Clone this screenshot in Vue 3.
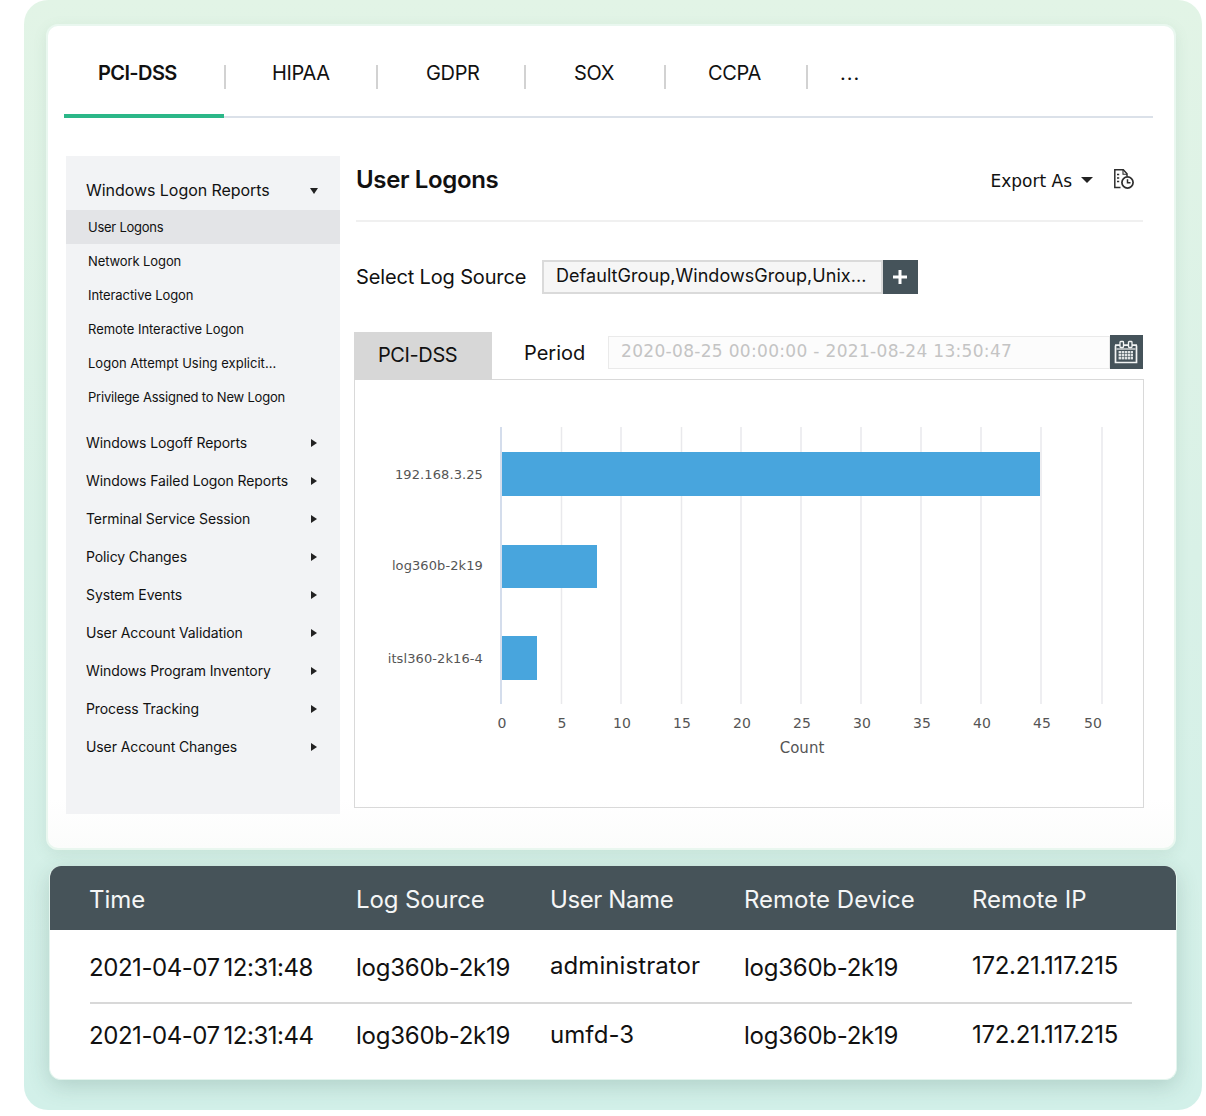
<script setup>
const tabs = [
  { name: 'PCI-DSS', w: 160, pad: 34, active: true },
  { name: 'HIPAA', w: 152, pad: 48 },
  { name: 'GDPR', w: 148, pad: 50 },
  { name: 'SOX', w: 140, pad: 50 },
  { name: 'CCPA', w: 142, pad: 44 }
]
const subs = [
  { t: 'User Logons', ls: -0.25 },
  { t: 'Network Logon', ls: -0.1 },
  { t: 'Interactive Logon', ls: -0.08 },
  { t: 'Remote Interactive Logon', ls: -0.05 },
  { t: 'Logon Attempt Using explicit...', ls: 0.02 },
  { t: 'Privilege Assigned to New Logon', ls: -0.2 }
]
const groups = ['Windows Logoff Reports', 'Windows Failed Logon Reports', 'Terminal Service Session', 'Policy Changes', 'System Events', 'User Account Validation', 'Windows Program Inventory', 'Process Tracking', 'User Account Changes']
const grid = [561.5, 621, 681.5, 741, 801, 861, 921, 981, 1041, 1102]
const ticks = [[502, 0], [562, 5], [622, 10], [682, 15], [742, 20], [802, 25], [862, 30], [922, 35], [982, 40], [1042, 45], [1093, 50]]
const bars = [
  { label: '192.168.3.25', y: 452, h: 44, w: 538, ty: 479 },
  { label: 'log360b-2k19', y: 545, h: 43, w: 95, ty: 570 },
  { label: 'itsl360-2k16-4', y: 636, h: 44, w: 35, ty: 663 }
]
const calCells = []
for (let r = 0; r < 3; r++) {
  for (let c = 0; c < 5; c++) {
    calCells.push({ x: 4.600 + c * 3, y: 11 + r * 3 })
  }
}
const cols = ['Time', 'Log Source', 'User Name', 'Remote Device', 'Remote IP']
const rows = [
  ['2021-04-07 12:31:48', 'log360b-2k19', 'administrator', 'log360b-2k19', '172.21.117.215'],
  ['2021-04-07 12:31:44', 'log360b-2k19', 'umfd-3', 'log360b-2k19', '172.21.117.215']
]
</script>

<template>
  <div class="page">
    <div class="panel">
      <section class="card">
        <nav class="tabs">
          <div v-for="t in tabs" :key="t.name" class="tab" :class="{ active: t.active }" :style="{ width: t.w + 'px', paddingLeft: t.pad + 'px' }">
            <span>{{ t.name }}</span>
            <i class="sep"></i>
          </div>
          <div class="tab more">...</div>
        </nav>

        <div class="body">
          <aside class="side">
            <div class="side-head"><span>Windows Logon Reports</span><i class="caret-down"></i></div>
            <div v-for="(s, i) in subs" :key="s.t" class="sub" :class="{ current: i === 0 }" :style="{ letterSpacing: s.ls + 'px' }">{{ s.t }}</div>
            <div class="groups">
              <div v-for="g in groups" :key="g" class="group"><span>{{ g }}</span><i class="caret-right"></i></div>
            </div>
          </aside>

          <main class="main">
            <header class="title-row">
              <h1>User Logons</h1>
              <div class="export">
                <span class="export-label">Export As</span>
                <i class="caret-export"></i>
                <svg class="doc" width="22" height="22" viewBox="0 0 22 22" fill="none" stroke="#2e2e2e" stroke-width="1.5">
                  <path d="M7.500 19.500H1.800V1.800h8.500l3.700 3.900v2.800" />
                  <path d="M10 2v4.200h4" stroke-width="1.100" />
                  <path d="M4 6.500h2.200M4 10h2.200M4 13.500h2.200" stroke-width="1.700" />
                  <circle cx="14.500" cy="14.500" r="5.600" stroke-width="1.700" />
                  <path d="M14.500 11.200v3.500h3" stroke-width="1.500" />
                </svg>
              </div>
            </header>

            <div class="source-row">
              <span class="source-label">Select Log Source</span>
              <div class="source-value">DefaultGroup,WindowsGroup,Unix...</div>
              <button class="plus" aria-label="Add">
                <svg width="16" height="16" viewBox="0 0 16 16"><path d="M8 1v14M1 8h14" stroke="#fff" stroke-width="3" /></svg>
              </button>
            </div>

            <div class="filter-row">
              <div class="pill">PCI-DSS</div>
              <span class="period">Period</span>
              <div class="date">2020-08-25 00:00:00 - 2021-08-24 13:50:47</div>
              <div class="cal">
                <svg width="24" height="24" viewBox="0 0 24 24">
                  <path d="M1.500 5.500v17h21v-17" fill="none" stroke="#f2f4f4" stroke-width="1.700" />
                  <path d="M1 5.200h5M10 5.200h4M18 5.200h5" stroke="#f2f4f4" stroke-width="1.700" />
                  <rect x="6" y="1.500" width="3.500" height="6" rx=".8" fill="#45535a" stroke="#f2f4f4" stroke-width="1.300" />
                  <rect x="14.500" y="1.500" width="3.500" height="6" rx=".8" fill="#45535a" stroke="#f2f4f4" stroke-width="1.300" />
                  <path d="M2.500 9h19" stroke="#f2f4f4" stroke-width="1.200" />
                  <rect v-for="(c, i) in calCells" :key="i" :x="c.x" :y="c.y" width="2.400" height="2.400" fill="#dfe3e4" />
                </svg>
              </div>
            </div>

            <div class="chart">
              <svg width="790" height="429" viewBox="354 379 790 429">
                <line v-for="x in grid" :key="x" :x1="x" :x2="x" y1="427" y2="704" stroke="#e9e9ec" stroke-width="1.500" />
                <line x1="501" x2="501" y1="427" y2="704" stroke="#c6d2e6" stroke-width="1.500" />
                <g v-for="b in bars" :key="b.label">
                  <rect x="502" :y="b.y" :width="b.w" :height="b.h" fill="#48a5dd" />
                  <text x="483" :y="b.ty" text-anchor="end" class="cat">{{ b.label }}</text>
                </g>
                <text v-for="t in ticks" :key="t[1]" :x="t[0]" y="728" text-anchor="middle" class="tick">{{ t[1] }}</text>
                <text x="802" y="753" text-anchor="middle" class="axis">Count</text>
              </svg>
            </div>
          </main>
        </div>
      </section>

      <section class="table">
        <div class="thead">
          <div v-for="(c, j) in cols" :key="c" :class="'h' + j">{{ c }}</div>
        </div>
        <div v-for="(r, i) in rows" :key="i" class="trow" :class="{ first: i === 0 }">
          <div v-for="(v, j) in r" :key="j" :class="['c' + j, { raised: j === 2 || j === 4 }]">{{ v }}</div>
        </div>
      </section>
    </div>
  </div>
</template>

<style>
html, body { margin: 0; background: #fff; }
</style>

<style scoped>
* { box-sizing: border-box; }
.page {
  width: 1206px;
  height: 1116px;
  padding-left: 24px;
  background: #fff;
  font-family: Inter, "Liberation Sans", sans-serif;
  color: #111;
  overflow: hidden;
}
.panel {
  width: 1178px;
  height: 1110px;
  padding: 24px 0 0 22px;
  border-radius: 24px;
  background: linear-gradient(180deg, #e2f4e6 0%, #d9f1e7 50%, #d2f0e9 100%);
}
.card {
  width: 1130px;
  height: 826px;
  padding: 0 21px 0 16px;
  background: linear-gradient(180deg, #fff 94%, #fbfcfb 100%);
  border: 2px solid #e9f7ef;
  border-radius: 12px;
  box-shadow: 0 4px 14px rgba(90, 130, 110, 0.12);
}
.tabs {
  display: flex;
  height: 92px;
  border-bottom: 2px solid #dbe1e9;
}
.tab {
  position: relative;
  display: flex;
  align-items: center;
  height: 92px;
  padding-top: 2px;
  font-size: 20px;
  letter-spacing: -0.35px;
}
.tab.active { font-weight: 600; letter-spacing: -0.6px; }
.tab.active::after {
  content: '';
  position: absolute;
  left: 0;
  right: 0;
  bottom: 0;
  height: 4px;
  background: #2bb788;
}
.sep {
  position: absolute;
  right: -2px;
  top: 39px;
  width: 2px;
  height: 24px;
  background: #d2d2d2;
}
.more { padding-left: 34px; letter-spacing: 1px; }
.body {
  display: flex;
  padding: 38px 0 0 2px;
}
.side {
  flex: none;
  width: 274px;
  height: 658px;
  background: #f2f3f5;
}
.side-head {
  display: flex;
  align-items: center;
  justify-content: space-between;
  height: 54px;
  padding: 13px 22px 0 20px;
  font-size: 16px;
  letter-spacing: -0.05px;
}
.caret-down {
  width: 0;
  height: 0;
  margin-top: 2px;
  border: 4.500px solid transparent;
  border-top: 6px solid #222;
  border-bottom: 0;
}
.sub {
  height: 34px;
  padding-left: 22px;
  font-size: 13px;
  line-height: 34px;
}
.sub.current { background: #e3e4e7; }
.groups { padding-top: 9px; }
.group {
  display: flex;
  align-items: center;
  justify-content: space-between;
  height: 38px;
  padding: 0 23px 0 20px;
  font-size: 14px;
  letter-spacing: -0.1px;
}
.caret-right {
  width: 0;
  height: 0;
  margin-top: 1px;
  border: 4.500px solid transparent;
  border-left: 6px solid #222;
  border-right: 0;
}
.main {
  flex: none;
  width: 790px;
  margin-left: 14px;
}
.title-row {
  display: flex;
  align-items: center;
  justify-content: space-between;
  height: 66px;
  margin: 0 1px 0 2px;
  padding-bottom: 18px;
  border-bottom: 2px solid #f0f0f0;
}
h1 {
  margin: 0;
  font-size: 24px;
  font-weight: 600;
  letter-spacing: -0.35px;
}
.export {
  display: flex;
  align-items: center;
  padding-right: 8px;
  font-family: "DejaVu Sans", sans-serif;
  font-size: 17px;
}
.export-label { margin-top: 4px; }
.caret-export {
  width: 0;
  height: 0;
  margin: 2px 0 0 9px;
  border: 6px solid transparent;
  border-top: 6px solid #222;
  border-bottom: 0;
}
.doc { margin-left: 20px; }
.source-row {
  display: flex;
  align-items: center;
  height: 34px;
  margin-top: 38px;
  padding-left: 2px;
}
.source-label { width: 186px; font-size: 20px; letter-spacing: -0.15px; }
.source-value {
  width: 341px;
  height: 34px;
  padding-left: 12px;
  border: 2px solid #dadada;
  background: #f6f6f6;
  font-size: 18px;
  line-height: 28px;
  letter-spacing: 0.06px;
}
.plus {
  display: flex;
  align-items: center;
  justify-content: center;
  width: 35px;
  height: 34px;
  padding: 0 2px 0 0;
  border: 0;
  background: #45535a;
}
.filter-row {
  display: flex;
  align-items: center;
  height: 48px;
  margin-top: 38px;
}
.pill {
  width: 138px;
  height: 48px;
  padding-left: 24px;
  background: #d7d7d7;
  font-size: 20px;
  line-height: 46px;
  letter-spacing: -0.4px;
}
.period { width: 116px; padding-left: 32px; padding-bottom: 6px; font-size: 20px; }
.date {
  width: 502px;
  height: 33px;
  margin-bottom: 8px;
  padding-left: 12px;
  border: 1px solid #eaeaea;
  background: #fcfcfc;
  color: #c4c4c4;
  font-family: "DejaVu Sans", sans-serif;
  font-size: 17px;
  line-height: 29px;
  letter-spacing: 0.32px;
}
.cal {
  display: flex;
  align-items: center;
  justify-content: center;
  width: 33px;
  height: 34px;
  margin-bottom: 8px;
  padding-right: 2px;
  background: #45535a;
}
.chart {
  width: 790px;
  height: 429px;
  margin-top: -1px;
  border: 1px solid #d9d9d9;
}
.chart svg { display: block; margin: -1px; }
.cat, .tick, .axis {
  font-family: "DejaVu Sans", sans-serif;
  fill: #555;
}
.cat { font-size: 13px; letter-spacing: 0.1px; }
.tick { font-size: 14px; }
.axis { font-size: 15px; }
.table {
  width: 1128px;
  height: 214px;
  margin: 16px 0 0 3px;
  border: 1px solid #e4f5ee;
  border-top: 0;
  border-radius: 12px;
  background: #fff;
  box-shadow: 0 6px 22px rgba(40, 80, 70, 0.2);
  overflow: hidden;
}
.thead, .trow {
  display: grid;
  grid-template-columns: 266px 194px 194px 228px 1fr;
  align-items: center;
  font-size: 24px;
}
.thead {
  height: 64px;
  padding: 2px 0 0 40px;
  background: #465359;
  color: #f5f6f6;
}
.h0 { margin-left: -1px; }
.h1 { letter-spacing: -0.1px; }
.h2 { letter-spacing: -0.4px; }
.trow {
  height: 62px;
  margin-left: 40px;
  margin-right: 44px;
}
.trow.first {
  height: 74px;
  padding-top: 2px;
  border-bottom: 2px solid #d8d8d8;
}
.c0 { margin-left: -1px; letter-spacing: -0.45px; word-spacing: -2.500px; white-space: nowrap; }
.c1, .c3 { letter-spacing: -0.25px; }
.c2 { letter-spacing: 0.08px; }
.c4 { letter-spacing: -0.3px; }
.raised { margin-bottom: 2px; }
.first .raised { margin-bottom: 4px; }
</style>
